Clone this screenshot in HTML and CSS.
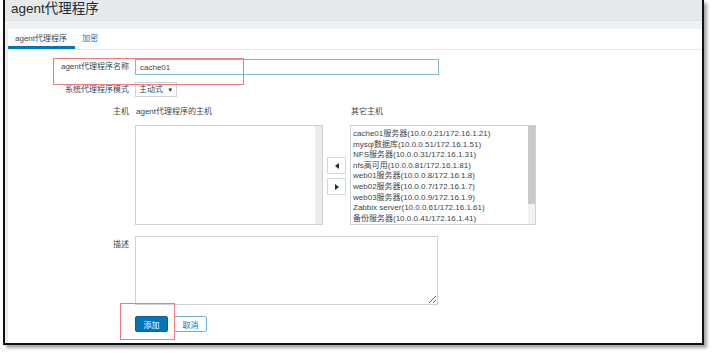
FILE: index.html
```html
<!DOCTYPE html>
<html lang="zh">
<head>
<meta charset="utf-8">
<link rel="stylesheet" href="styles.css">
</head>
<body>
<div class="frame">
  <div class="page">
    <div class="header"><h1 class="title">agent代理程序</h1></div>
    <div class="band"></div>
    <div class="panel">
      <div class="tabs">
        <span class="tab active">agent代理程序</span>
        <span class="tab link">加密</span>
      </div>
      <div class="form">
        <div class="row row-name">
          <label class="label">agent代理程序名称</label>
          <div class="field"><input class="text-input" type="text" value="cache01"></div>
        </div>
        <div class="row row-mode">
          <label class="label">系统代理程序模式</label>
          <div class="field"><div class="select">主动式 <span class="caret">▼</span></div></div>
        </div>
        <div class="row row-hosts">
          <label class="label">主机</label>
          <div class="field hosts">
            <div class="hosts-col">
              <div class="hosts-head">agent代理程序的主机</div>
              <div class="listbox left-box">
                <div class="list"></div>
                <div class="scroll empty"></div>
              </div>
            </div>
            <div class="move">
              <div class="move-btn"><span class="tri tri-left"></span></div>
              <div class="move-btn"><span class="tri tri-right"></span></div>
            </div>
            <div class="hosts-col">
              <div class="hosts-head">其它主机</div>
              <div class="listbox right-box">
                <div class="list">
                  <div>cache01服务器(10.0.0.21/172.16.1.21)</div>
                  <div>mysql数据库(10.0.0.51/172.16.1.51)</div>
                  <div>NFS服务器(10.0.0.31/172.16.1.31)</div>
                  <div>nfs高可用(10.0.0.81/172.16.1.81)</div>
                  <div>web01服务器(10.0.0.8/172.16.1.8)</div>
                  <div>web02服务器(10.0.0.7/172.16.1.7)</div>
                  <div>web03服务器(10.0.0.9/172.16.1.9)</div>
                  <div>Zabbix server(10.0.0.61/172.16.1.61)</div>
                  <div>备份服务器(10.0.0.41/172.16.1.41)</div>
                </div>
                <div class="scroll"><div class="thumb"></div></div>
              </div>
            </div>
          </div>
        </div>
        <div class="row row-desc">
          <label class="label">描述</label>
          <div class="field"><textarea class="textarea"></textarea></div>
        </div>
        <div class="row row-buttons">
          <span></span>
          <div class="field buttons">
            <button class="btn primary">添加</button>
            <button class="btn secondary">取消</button>
          </div>
        </div>
      </div>
    </div>
  </div>
  <div class="mark mark-name"></div>
  <div class="mark mark-add"></div>
</div>
</body>
</html>
```

FILE: styles.css
```css
* { box-sizing: border-box; }
html, body { margin: 0; padding: 0; background: #ffffff; }
body {
  font-family: "Liberation Sans", "Noto Sans CJK SC", sans-serif;
  color: #1f2c33;
  width: 712px;
  height: 354px;
  overflow: hidden;
}
.frame {
  position: relative;
  margin-left: 3px;
  width: 701px;
  height: 345px;
  border-left: 2px solid #111;
  border-right: 2px solid #111;
  border-bottom: 2px solid #111;
  box-shadow: 3px 3px 3px rgba(0,0,0,0.35);
}
.page {
  height: 100%;
  background: #ebeef0;
  padding-left: 3px;
  display: flex;
  flex-direction: column;
}
.header {
  height: 21px;
  background: #e6e9ec;
  margin-left: -3px;
  padding-left: 6px;
  border-bottom: 1px solid #dde1e4;
}
.title {
  margin: 0;
  font-weight: normal;
  font-size: 13.5px;
  line-height: 18px;
  color: #1f2c33;
}
.band {
  height: 8px;
  background: #eef0f2;
  margin-left: -3px;
}
.panel {
  flex: 1;
  background: #ffffff;
}
.tabs {
  height: 21px;
  display: flex;
  border-bottom: 1px solid #e8ebed;
}
.tab {
  font-size: 8px;
  line-height: 18px;
  padding: 1px 7px 0 7px;
  color: #3a464c;
  white-space: nowrap;
}
.tab.active {
  padding: 1px 8px 0 7px;
  border-bottom: 3px solid #0275b8;
}
.tab.link { color: #0275b8; }
.form {
  padding-top: 9px;
  display: flex;
  flex-direction: column;
}
.row {
  display: grid;
  grid-template-columns: 121px 1fr;
  column-gap: 6px;
  align-items: start;
}
.label {
  text-align: right;
  font-size: 8px;
  color: #3a464c;
  white-space: nowrap;
}
.row-name .label { line-height: 16px; }
.row-mode { margin-top: 7px; }
.row-mode .label { line-height: 15px; }
.text-input {
  display: block;
  width: 304px;
  height: 16px;
  border: 1px solid #82b3d9;
  padding: 0 4px;
  font: 8px "Liberation Sans", "Noto Sans CJK SC", sans-serif;
  color: #3a464c;
  outline: none;
}
.select {
  width: 42px;
  height: 15px;
  border: 1px solid #cdd4d8;
  font-size: 8px;
  line-height: 13px;
  padding-left: 3px;
  color: #3a464c;
  white-space: nowrap;
}
.caret { font-size: 6px; margin-left: 2px; color: #1f2c33; }
.row-hosts { margin-top: 10px; }
.row-hosts .label { line-height: 10px; }
.hosts {
  display: flex;
  align-items: flex-start;
}
.hosts-col { display: flex; flex-direction: column; }
.hosts-head {
  font-size: 8px;
  line-height: 10px;
  height: 18px;
  padding-left: 1px;
  color: #3a464c;
  white-space: nowrap;
}
.listbox {
  display: flex;
  height: 100px;
  border: 1px solid #ccd3d7;
  background: #fff;
}
.left-box { width: 188px; }
.right-box { width: 186px; }
.list {
  flex: 1;
  font-size: 8px;
  line-height: 10.6px;
  padding: 3px 0 0 2px;
  color: #3a464c;
  white-space: nowrap;
  overflow: hidden;
}
.scroll {
  width: 7px;
  background: #f1f1f1;
}
.scroll.empty { background: #ececec; }
.thumb {
  height: 78px;
  background: #c8c8c8;
}
.move {
  width: 27px;
  padding: 50px 0 0 4px;
  display: flex;
  flex-direction: column;
  gap: 4px;
}
.move-btn {
  width: 19px;
  height: 17px;
  border: 1px solid #cfd6da;
  border-radius: 1px;
  display: flex;
  align-items: center;
  justify-content: center;
  background: #fff;
}
.tri {
  width: 0;
  height: 0;
  border-top: 3px solid transparent;
  border-bottom: 3px solid transparent;
}
.tri-left { border-right: 4px solid #1f2c33; }
.tri-right { border-left: 4px solid #1f2c33; }
.row-desc { margin-top: 11px; }
.row-desc .label { padding-top: 4px; line-height: 10px; }
.textarea {
  display: block;
  width: 303px;
  height: 69px;
  border: 1px solid #ccd3d7;
  resize: both;
  margin: 0;
  outline: none;
}
.row-buttons { margin-top: 11px; }
.buttons { display: flex; gap: 6px; }
.btn {
  width: 33px;
  height: 16px;
  font: 8px "Liberation Sans", "Noto Sans CJK SC", sans-serif;
  padding: 0;
  border-radius: 2px;
  cursor: pointer;
}
.btn.primary {
  background: #0275b8;
  border: 1px solid #02659f;
  color: #ffffff;
}
.btn.secondary {
  background: #ffffff;
  border: 1px solid #6fb2dd;
  color: #0275b8;
}
.mark {
  position: absolute;
  border: 1px solid #ec7c83;
}
.mark-name { left: 48px; top: 58px; width: 191px; height: 27px; }
.mark-add { left: 115px; top: 303px; width: 55px; height: 37px; }
```
